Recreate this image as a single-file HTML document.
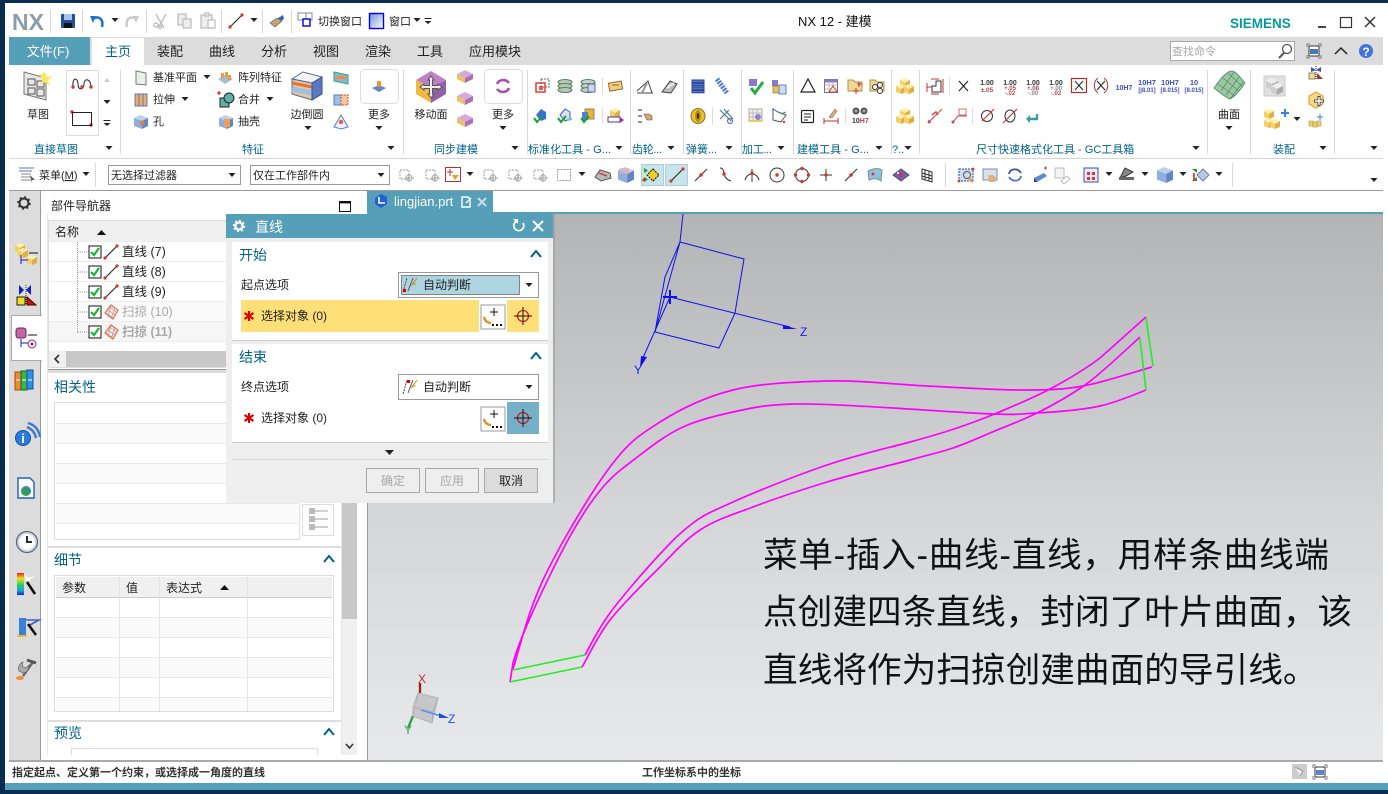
<!DOCTYPE html>
<html lang="zh"><head><meta charset="utf-8"><title>NX 12 - 建模</title>
<style>
html,body{margin:0;padding:0;background:#0a2c4e;width:1388px;height:794px;overflow:hidden}
svg{display:block;font-size:11px}
text{font-family:"Liberation Sans","Noto Sans CJK SC",sans-serif;fill:#222}
.m{text-anchor:middle}
.h{font-size:14px;fill:#00628c}
.g{font-size:11px;fill:#00628c}
.tb{font-size:13px}
.st{font-size:11px;fill:#333;font-weight:700}
.gr{fill:#a8a8a8}
.s8{font-size:7px;font-weight:700;fill:#333}
.s8r{font-size:6.5px;font-weight:700;fill:#b4464e}
.s8b{font-size:7.5px;font-weight:700;fill:#3c4fc0}
.ov{font-size:34.67px;fill:#111}
.ax{font-size:12px;fill:#1a1aff}
</style></head><body>
<svg width="1388" height="794" viewBox="0 0 1388 794" xmlns="http://www.w3.org/2000/svg">
<defs>
<linearGradient id="vp" x1="0" y1="0" x2="0" y2="1"><stop offset="0" stop-color="#b3b4b6"/><stop offset=".55" stop-color="#d5d6d8"/><stop offset="1" stop-color="#e8e9ea"/></linearGradient>
<linearGradient id="bl" x1="0" y1="0" x2="1" y2="1"><stop offset="0" stop-color="#6e94d8"/><stop offset="1" stop-color="#fff"/></linearGradient>
<polygon id="dn" points="-3.5,-2 3.5,-2 0,2" fill="#222"/>
<g id="ovf"><rect x="-3.5" y="-3" width="7" height="1" fill="#222"/><polygon points="-3.5,0 3.5,0 0,3" fill="#222"/></g>
<g id="ln"><path d="M-6,6L6,-6" stroke="#222" stroke-width="1.1"/><circle cx="-6" cy="6" r="1.6" fill="#d3342c"/><circle cx="6" cy="-6" r="1.6" fill="#d3342c"/></g>
<g id="lnm"><path d="M-6,6L6,-6" stroke="#333" stroke-width="1.1"/><circle r="1.8" fill="#d3342c"/></g>
<g id="yc"><polygon points="0,-5 5,-3 0,0 -5,-3" fill="#fff0b0"/><polygon points="-5,-3 0,0 0,5 -5,3" fill="#f5cf62"/><polygon points="5,-3 0,0 0,5 5,3" fill="#dfae45"/></g>
<g id="cb"><polygon points="-1,-7 7,-4 1,-1 -7,-4" fill="#bcd0f0"/><polygon points="-7,-4 1,-1 1,7 -7,4" fill="#8eaee0"/><polygon points="7,-4 1,-1 1,7 7,4" fill="#5f86c8"/></g>
<g id="gyc"><polygon points="0,-6 6,-3 0,0 -6,-3" fill="#eee"/><polygon points="-6,-3 0,0 0,6 -6,3" fill="#ccc"/><polygon points="6,-3 0,0 0,6 6,3" fill="#aaa"/></g>
<g id="pk"><polygon points="0,-8 8,-4 0,0 -8,-4" fill="#d8a8dc"/><polygon points="-8,-4 0,0 0,5 -8,1" fill="#f0c060"/><polygon points="8,-4 0,0 0,5 8,1" fill="#a870b8"/></g>
<g id="chk"><rect x="-6" y="-6" width="12" height="12" fill="#fff" stroke="#111" stroke-width="1"/><path d="M-4,0L-1,3L4,-4" fill="none" stroke="#16b82e" stroke-width="2.2"/></g>
<g id="swp"><path d="M-6,1L0,-7L7,-2L2,7Z" fill="#eee" stroke="#e07040" stroke-width="1.2"/><path d="M-3,-2L4,3M-1,-5L5,0M-5,1L2,6M0,-7L-3,5M4,-4L0,7" stroke="#c88" stroke-width=".7"/></g>
<g id="chv"><path d="M-5,3L0,-3L5,3" fill="none" stroke="#00628c" stroke-width="2"/></g>
<g id="cross"><circle r="5.5" fill="none" stroke="#e00000" stroke-width="1.1"/><path d="M-9,0H9M0,-9V9" stroke="#111" stroke-width="1"/></g>
<g id="plus"><rect x="-12" y="-12" width="24" height="24" fill="#fff" stroke="#999"/><path d="M-3,-5H5M1,-9V-1" stroke="#111" stroke-width="1"/><path d="M-9,0C-8,5 -4,6 -2,6" fill="none" stroke="#e88a20" stroke-width="2.4"/><path d="M-1,8h2M3,8h2M7,8h2" stroke="#111" stroke-width="2"/></g>
<g id="ast"><path d="M0,-5V5M-4.5,-3L4.5,3M-4.5,3L4.5,-3" stroke="#dd0000" stroke-width="2.2"/></g>
<g id="infer"><path d="M-7,7L-3,-7" stroke="#444" stroke-width="1" stroke-dasharray="2 1"/><path d="M-2,6L3,-7" stroke="#555" stroke-width="1"/><path d="M1,1L7,-7L3,-1L6,-1" fill="#e8c020" stroke="#b89010" stroke-width=".8"/></g>
<g id="gicon"><rect x="-6" y="-5" width="9" height="9" fill="none" stroke="#bbb" stroke-width="1.4" stroke-dasharray="2 1"/><path d="M3,-2v9M-1,3h9" stroke="#aaa"/><circle cx="3" cy="3" r="3" fill="none" stroke="#aaa"/></g>
</defs>

<rect width="1388" height="794" fill="#0a2c4e"/>
<rect x="0" y="0" width="1388" height="3" fill="#0b2e50"/>
<rect x="5" y="3" width="1383" height="780" fill="#fff"/>
<rect x="5" y="783" width="1383" height="7" fill="#559fb8"/>

<!-- title bar -->
<text x="12" y="30" style="font-size:23px;font-weight:700;fill:#8b9cab">NX</text>
<path d="M50.5,10V33M82.5,10V33M146.5,10V33M221.5,10V33M262.5,10V33M291.5,10V33" stroke="#d8d8d8"/>
<g transform="translate(68,21)"><rect x="-7" y="-7" width="14" height="14" rx="1" fill="#1f4e9c"/><rect x="-4" y="-7" width="8" height="6" fill="#a9c4ea"/><rect x="-4" y="2" width="8" height="5" fill="#111"/></g>
<g transform="translate(97,21)"><path d="M5,6C7,-2 1,-6 -4,-2" fill="none" stroke="#1d72d6" stroke-width="2.6"/><polygon points="-7,-5 -1,-5 -4,2" fill="#1d72d6"/></g>
<use href="#dn" x="115" y="20"/>
<g transform="translate(132,21)"><path d="M-5,6C-7,-2 -1,-6 4,-2" fill="none" stroke="#ccc" stroke-width="2.6"/><polygon points="7,-5 1,-5 4,2" fill="#ccc"/></g>
<g transform="translate(161,21)" stroke="#bbb" fill="none" stroke-width="1.3"><path d="M-3,7L5,-7M3,7L-4,-5M-5,-7L-2,-1"/><circle cx="-5" cy="4" r="2"/><circle cx="-1" cy="6" r="1.5"/></g>
<g transform="translate(184,21)" fill="#eee" stroke="#bbb" stroke-width="1.2"><rect x="-6" y="-7" width="8" height="11"/><rect x="-1" y="-2" width="8" height="9"/></g>
<g transform="translate(208,21)" fill="#eee" stroke="#bbb" stroke-width="1.2"><rect x="-7" y="-6" width="11" height="13"/><rect x="-3" y="-8" width="4" height="3"/><rect x="0" y="-1" width="7" height="8" fill="#fff"/></g>
<use href="#ln" x="236" y="21"/><use href="#dn" x="254" y="20"/>
<g transform="translate(277,21)"><path d="M-7,2L0,-3L5,0L-2,6Z" fill="#c9a070" stroke="#555" stroke-width=".6"/><path d="M1,-3L6,-6L7,-2L4,0Z" fill="#3a5fc0"/></g>
<g transform="translate(305,20)"><rect x="-7" y="-7" width="8" height="7" fill="none" stroke="#888"/><rect x="1" y="-7" width="6" height="7" fill="none" stroke="#888"/><rect x="-2" y="-1" width="7" height="7" fill="#fff" stroke="#0000ee" stroke-width="1.4"/></g>
<text x="318" y="25">切换窗口</text>
<rect x="369.500" y="13.500" width="14" height="15" fill="url(#bl)" stroke="#0000ee" stroke-width="1.4"/>
<text x="389" y="25">窗口</text>
<use href="#dn" x="417" y="20"/><use href="#ovf" x="428" y="21"/>
<text x="798" y="26" style="font-size:13px;fill:#111">NX 12 - 建模</text>
<text x="1230" y="28" style="font-size:13.500px;font-weight:700;fill:#059a9a">SIEMENS</text>
<rect x="1318" y="26" width="8" height="2" fill="#444"/>
<rect x="1340.500" y="17.500" width="11" height="10" fill="none" stroke="#333" stroke-width="1.2"/>
<path d="M1365,17L1375,27M1375,17L1365,27" stroke="#333" stroke-width="1.5"/>

<!-- tabs -->
<rect x="9" y="37" width="1374" height="28" fill="#dcdcdc"/>
<rect x="9" y="37" width="81" height="28" fill="#559fb8"/>
<rect x="92" y="38" width="52" height="27" fill="#fff"/>
<text x="48" y="56" class="m tb" style="fill:#fff">文件(F)</text>
<text x="118" y="56" class="m tb" style="fill:#00628c">主页</text>
<text x="170" y="56" class="m tb">装配</text><text x="222" y="56" class="m tb">曲线</text><text x="274" y="56" class="m tb">分析</text><text x="326" y="56" class="m tb">视图</text><text x="378" y="56" class="m tb">渲染</text><text x="430" y="56" class="m tb">工具</text><text x="495" y="56" class="m tb">应用模块</text>
<rect x="1170.500" y="41.500" width="124" height="19" fill="#fff" stroke="#aaa"/>
<text x="1172" y="55" class="gr">查找命令</text>
<g fill="none" stroke="#555" stroke-width="1.3"><circle cx="1287" cy="49" r="4.500"/><path d="M1284,53L1279,58" stroke-width="2"/></g>
<g transform="translate(1314,51)"><path d="M-7,-4V-7H-4M4,-7H7V-4M7,4V7H4M-4,7H-7V4" fill="none" stroke="#777"/><rect x="-5" y="-5" width="10" height="10" fill="#fff" stroke="#333"/><rect x="-4" y="-2" width="8" height="5" fill="#4a74c0"/></g>
<path d="M1335,54L1341,48L1347,54" fill="none" stroke="#222" stroke-width="1.5"/>
<circle cx="1366" cy="51" r="7" fill="#3f74d8"/><text x="1366" y="56" class="m" style="font-size:12px;font-weight:700;fill:#fff">?</text>

<!-- ribbon dividers -->
<path d="M120.500,70V154M403.500,70V154M527.500,70V154M630.500,70V154M683.500,70V154M741.500,70V154M793.500,70V154M891.500,70V154M919.500,70V154M1207.500,70V154M1250.500,70V154M1334.500,70V154" stroke="#d8d8d8"/>
<path d="M9,158.500H1383" stroke="#d4d4d4"/>

<!-- sketch -->
<g transform="translate(38,86)"><polygon points="-14,-14 8,-8 8,14 -14,8" fill="#e8e8e8" stroke="#777"/><rect x="-10" y="-7" width="7" height="6" fill="none" stroke="#555"/><rect x="-1" y="-5" width="7" height="6" fill="none" stroke="#555"/><rect x="-10" y="2" width="7" height="6" fill="none" stroke="#555"/><rect x="-1" y="3" width="7" height="7" fill="none" stroke="#555"/><path d="M7,-14L9,-9L15,-10L10,-6L12,0L7,-4L2,-1L5,-7L1,-11Z" fill="#f8e860"/></g>
<text x="38" y="118" class="m">草图</text>
<rect x="66.500" y="70.500" width="32" height="65" fill="#fff" stroke="#ddd"/>
<path d="M73,87C72,76 78,78 78,84C78,91 84,90 84,84C84,78 91,78 91,87" fill="none" stroke="#222"/>
<g fill="#d3342c"><circle cx="73" cy="87" r="1.700"/><circle cx="82" cy="87" r="1.700"/><circle cx="91" cy="87" r="1.700"/><circle cx="72" cy="112" r="1.700"/><circle cx="91" cy="125" r="1.700"/></g>
<rect x="72.500" y="112.500" width="19" height="13" fill="none" stroke="#222"/>
<polygon points="104,82 110,82 107,78" fill="#ccc"/><use href="#dn" x="107" y="102"/><use href="#ovf" x="107" y="123"/>
<text x="56" y="153" class="m g">直接草图</text><use href="#dn" x="109" y="148"/>

<!-- feature -->
<g transform="translate(141,78)"><polygon points="-5,-7 5,-5 5,7 -5,6" fill="#e8f0e8" stroke="#777"/></g>
<text x="153" y="81">基准平面</text><use href="#dn" x="207" y="77"/>
<g transform="translate(141,100)"><rect x="-6" y="-6" width="12" height="12" fill="#f0b060" stroke="#5a7ac0"/><path d="M-2,-6V6M2,-6V6" stroke="#5a7ac0"/></g>
<text x="153" y="103">拉伸</text><use href="#dn" x="185" y="99"/>
<g transform="translate(141,122)"><use href="#cb"/><circle cx="1" cy="1" r="2.500" fill="#e08040"/></g>
<text x="153" y="125">孔</text>
<g transform="translate(225,78)"><polygon points="-7,1 0,-3 8,1 0,6" fill="#a8bcd8"/><rect x="-4" y="-5" width="3" height="5" fill="#e8a040"/><rect x="0" y="-6" width="3" height="5" fill="#e8a040"/><rect x="3" y="-3" width="3" height="5" fill="#e8a040"/></g>
<text x="238" y="81">阵列特征</text>
<g transform="translate(226,100)"><rect x="-6" y="-2" width="9" height="9" fill="#5fb0a8" stroke="#222"/><circle cx="3" cy="-2" r="5" fill="#5fb0a8" stroke="#222"/><path d="M-9,-7h4M-7,-9v4" stroke="#d00"/></g>
<text x="238" y="103">合并</text><use href="#dn" x="270" y="99"/>
<g transform="translate(226,122)"><use href="#cb"/><rect x="-2" y="-3" width="6" height="8" fill="#f0a050"/></g>
<text x="238" y="125">抽壳</text>
<g transform="translate(307,86)"><polygon points="-15,-7 -4,-14 15,-9 5,-3" fill="#f4f4f4" stroke="#4a66b0"/><path d="M-15,-7L5,-3L5,14L-15,8Z" fill="#e8c890" stroke="#4a66b0"/><path d="M-15,-3L5,1" stroke="#e87040" stroke-width="3"/><path d="M-15,3L5,7" stroke="#9cc0e8" stroke-width="5"/><path d="M5,-3L15,-9V8L5,14Z" fill="#5878c0" stroke="#3a4f98"/></g>
<text x="307" y="118" class="m">边倒圆</text><use href="#dn" x="308" y="128"/>
<g transform="translate(341,78)"><polygon points="-7,-6 7,-3 7,6 -7,3" fill="#88b4e0" stroke="#3a6"/><rect x="-5" y="-2" width="10" height="3" fill="#f09040"/></g>
<g transform="translate(341,100)"><rect x="-7" y="-5" width="9" height="10" fill="#9cc0ee" stroke="#5a7ac0"/><rect x="0" y="-5" width="7" height="10" fill="#f4c8a0" stroke="#d85030" stroke-dasharray="2 1"/></g>
<g transform="translate(341,122)"><polygon points="0,-7 7,5 0,7 -7,5" fill="#f0f0ff" stroke="#5a7ac0"/><circle cy="0" r="2.200" fill="#e06030"/></g>
<rect x="360.500" y="69.500" width="38" height="34" rx="4" fill="#fff" stroke="#ddd"/>
<g transform="translate(379,87)"><polygon points="-7,1 0,-2 7,1 0,5" fill="#5f88c8"/><rect x="-2" y="-6" width="4" height="6" fill="#f09030"/></g>
<text x="379" y="118" class="m">更多</text><use href="#dn" x="379" y="128"/>
<text x="253" y="153" class="m g">特征</text><use href="#dn" x="391" y="148"/>

<!-- sync -->
<g transform="translate(431,87)"><polygon points="-15,-7 0,-16 15,-7 0,1" fill="#c080c8"/><polygon points="-15,-7 0,1 0,16 -15,7" fill="#f0b840"/><polygon points="15,-7 0,1 0,16 15,7" fill="#9060a8"/><polygon points="0,-11 3,-7 1.500,-7 1.500,-1.500 7,-1.500 7,-3 11,0 7,3 7,1.500 1.500,1.500 1.500,7 3,7 0,11 -3,7 -1.500,7 -1.500,1.500 -7,1.500 -7,3 -11,0 -7,-3 -7,-1.500 -1.500,-1.500 -1.500,-7 -3,-7" fill="#eee" stroke="#555"/></g>
<text x="431" y="118" class="m">移动面</text>
<use href="#pk" x="465" y="78"/><use href="#pk" x="465" y="100"/><use href="#pk" x="465" y="122"/>
<rect x="484.500" y="69.500" width="38" height="34" rx="4" fill="#fff" stroke="#ddd"/>
<g transform="translate(503,86)" fill="none" stroke="#a850b0" stroke-width="2.600"><path d="M-6,-2C-4,-7 3,-7 6,-3"/><path d="M6,2C4,7 -3,7 -6,3"/></g>
<text x="503" y="118" class="m">更多</text><use href="#dn" x="503" y="128"/>
<text x="434" y="153" class="g">同步建模</text><use href="#dn" x="515" y="148"/>

<!-- standard tools -->
<g transform="translate(542,86)"><rect x="-6" y="-3" width="9" height="9" fill="none" stroke="#e03020" stroke-width="1.4"/><rect x="-1" y="-7" width="8" height="8" fill="none" stroke="#666" stroke-dasharray="2 1"/><rect x="-3" y="0" width="4" height="4" fill="#e06050"/></g>
<g transform="translate(565,86)" stroke="#4f7f60" fill="#b8c8b8"><ellipse cy="-4" rx="7" ry="2.500"/><ellipse cy="0" rx="7" ry="2.500"/><ellipse cy="4" rx="7" ry="2.500"/></g>
<g transform="translate(588,86)" stroke="#4f7f60" fill="#c8d0c8"><ellipse cy="-4" rx="7" ry="2.500"/><ellipse cy="0" rx="7" ry="2.500"/><ellipse cy="4" rx="7" ry="2.500"/><rect x="0" y="-2" width="7" height="8" fill="#d0d8f0" stroke="#5060b0"/></g>
<g transform="translate(616,86)"><rect x="-7" y="-4" width="13" height="8" fill="#f0d080" stroke="#a06020" transform="rotate(-10)"/><path d="M-4,-1H3" stroke="#a06020"/></g>
<path d="M602.500,78V94M602.500,108V124" stroke="#ddd"/>
<g transform="translate(541,116)"><polygon points="-5,-1 0,-7 5,-4 5,3 0,5" fill="#3a70d0"/><path d="M-7,2L-4,6L1,0" fill="none" stroke="#18a030" stroke-width="2"/></g>
<g transform="translate(565,116)"><polygon points="-5,-1 0,-7 5,-4 5,3 0,5" fill="#d8e0f4" stroke="#4060c0"/><path d="M-7,2L-4,6L1,0" fill="none" stroke="#18a030" stroke-width="2"/><path d="M2,4L7,3" stroke="#6cb" stroke-width="2"/></g>
<g transform="translate(588,116)"><rect x="-3" y="-7" width="9" height="10" fill="#f0b030" stroke="#886"/><rect x="-6" y="-4" width="6" height="8" fill="#5080d0"/><path d="M-7,2L-4,6L1,0" fill="none" stroke="#18a030" stroke-width="2"/></g>
<g transform="translate(615,116)"><use href="#yc" y="-3"/><rect x="-7" y="1" width="12" height="5" fill="#fff" stroke="#5030a0"/><polygon points="5,1 9,4 5,7" fill="#a030b0"/></g>
<text x="528" y="153" class="g" textLength="83">标准化工具 - G...</text><use href="#dn" x="619" y="148"/>

<!-- gear -->
<g transform="translate(645,87)" fill="none" stroke="#444"><path d="M-8,6H8M-8,4L3,-6L7,6"/><path d="M-3,6L2,-4" stroke="#999" stroke-width="2"/></g>
<g transform="translate(669,87)"><path d="M-7,5L1,-6L8,-3L2,6Z" fill="#bbb" stroke="#444"/><path d="M-2,1L5,-4" stroke="#eee" stroke-width="2"/></g>
<g transform="translate(645,116)"><path d="M-7,-6H-3M-7,0H-3M-7,6H-3" stroke="#222"/><path d="M-1,-2H4L7,0V4H2Z" fill="#d8a860" stroke="#555" stroke-width=".6"/></g>
<text x="632" y="153" class="g" textLength="30">齿轮...</text><use href="#dn" x="671" y="148"/>

<!-- spring -->
<g transform="translate(698,86)" fill="#5578d0" stroke="#283f90"><rect x="-6" y="-6" width="12" height="2.400"/><rect x="-6" y="-2.600" width="12" height="2.400"/><rect x="-6" y="1" width="12" height="2.400"/><rect x="-6" y="4.400" width="12" height="2.400"/></g>
<path d="M717,79L727,93" stroke="#5578d0" stroke-width="5" stroke-dasharray="2 1"/>
<g transform="translate(698,116)"><ellipse rx="7" ry="7.500" fill="#e8c030" stroke="#8c7010"/><ellipse rx="3" ry="6" fill="#b89010"/><ellipse rx="1.200" ry="3" fill="#333"/></g>
<path d="M712.500,107V125" stroke="#ddd"/>
<g transform="translate(726,116)" fill="none" stroke="#5578a0" stroke-width="1.200"><path d="M-6,-6L5,5M-2,-7L7,3M-6,3L3,-6"/><circle cx="4" cy="5" r="2.500"/></g>
<text x="686" y="153" class="g" textLength="31">弹簧...</text><use href="#dn" x="729" y="148"/>

<!-- machining -->
<g transform="translate(756,87)"><rect x="-7" y="-8" width="8" height="7" fill="#8a78c8"/><path d="M-5,1L-1,6L7,-5" fill="none" stroke="#20b040" stroke-width="3"/></g>
<g transform="translate(779,87)"><rect x="-7" y="-7" width="6" height="6" fill="#8a78c8"/><rect x="-6" y="-1" width="6" height="7" fill="#f0c050" stroke="#555" stroke-width=".5"/><rect x="0" y="-2" width="7" height="9" fill="#cfdcf0" stroke="#6080c0"/></g>
<g transform="translate(756,115)"><rect x="-7" y="-6" width="13" height="12" fill="#eee" stroke="#aa9"/><path d="M-7,-2H6M-7,2H6M-3,-6V6M1,-6V6" stroke="#bbb"/><circle cx="2" cy="2" r="3" fill="#9080d0"/><path d="M-7,6H6" stroke="#e8c020" stroke-width="1.500"/></g>
<g transform="translate(779,115)" fill="none" stroke="#555"><path d="M-6,-6V5L2,7L7,0L-1,-3Z"/><path d="M-6,-7V-3" stroke="#3050d0"/><path d="M2,-1L7,-3" stroke="#20a040"/><circle cx="5" cy="7" r="1.200" fill="#d33" stroke="none"/></g>
<text x="742" y="153" class="g" textLength="30">加工...</text><use href="#dn" x="781" y="148"/>

<!-- modeling tools -->
<polygon points="808,79 815,92 801,92" fill="none" stroke="#222" stroke-width="1.200"/>
<g transform="translate(831,86)"><rect x="-6.500" y="-6.500" width="13" height="13" fill="#fff" stroke="#777"/><rect x="-6.500" y="-6.500" width="13" height="3" fill="#8a78c8"/><path d="M-6,-1H6M-6,3H6M-2,-3V6M2,-3V6" stroke="#bbb"/><polygon points="2,0 6,6 -2,6" fill="#fff" stroke="#d33"/></g>
<g transform="translate(855,86)"><path d="M-7,-6H-2L0,-4H7V5H-7Z" fill="#f0d890" stroke="#a89050"/><path d="M-2,5h6M1,2v6M4,-4v5M2,-2h5" stroke="#d22"/></g>
<g transform="translate(877,86)"><path d="M-7,-6H-2L0,-4H7V5H-7Z" fill="#f0d890" stroke="#a89050"/><g fill="#fff" stroke="#333"><circle cx="-2" cy="1" r="2.500"/><circle cx="3" cy="-1" r="2.500"/><circle cx="3" cy="5" r="2.500"/></g></g>
<rect x="801.500" y="110.500" width="12" height="12" rx="1" fill="#fff" stroke="#222" stroke-width="1.200"/><path d="M804,114H811M804,117H811M804,120H808" stroke="#222"/>
<g transform="translate(831,116)"><path d="M-7,5H7M-7,2V8M7,2V8" stroke="#c03030"/><path d="M-2,1L4,-7L6,-5L1,2Z" fill="#d8b070" stroke="#555" stroke-width=".5"/></g>
<path d="M845.500,108V124" stroke="#ddd"/>
<g transform="translate(860,111)"><circle cx="-4" cy="0" r="3.500" fill="#555"/><circle cx="4" cy="0" r="3.500" fill="#555"/><circle cx="-4" cy="0" r="1.500" fill="#aaa"/><circle cx="4" cy="0" r="1.500" fill="#aaa"/></g>
<text x="852" y="123" class="s8">10<tspan style="fill:#c04048">H7</tspan></text>
<text x="797" y="153" class="g" textLength="72">建模工具 - G...</text><use href="#dn" x="879" y="148"/>
<g transform="translate(905,86)"><use href="#yc" x="0" y="-3"/><use href="#yc" x="-4" y="3"/><use href="#yc" x="4" y="3"/></g>
<g transform="translate(905,116)"><use href="#yc" x="0" y="-3"/><use href="#yc" x="-4" y="3"/><use href="#yc" x="4" y="3"/></g>
<text x="892" y="153" class="g">?..</text><use href="#dn" x="908" y="148"/>

<!-- dimension -->
<g transform="translate(935,86)" fill="none" stroke="#c03030"><path d="M-8,-3V6M8,-7V7M-8,1H-3M-4,-7H4M-4,8H4"/><path d="M-3,6V0H1V-5H6V6Z" stroke="#333"/></g>
<path d="M949.500,77V95" stroke="#ddd"/>
<path d="M959,81L968,91M968,81L959,91" stroke="#222" stroke-width="1.200"/>
<text x="987" y="85" class="m s8">1.00</text><text x="987" y="92" class="m s8r">±.05</text>
<text x="1010" y="85" class="m s8">1.00</text><text x="1010" y="90" class="m s8r" style="font-size:6px">+.05</text><text x="1010" y="95" class="m s8r" style="font-size:6px">-.02</text>
<text x="1033" y="85" class="m s8">1.00</text><text x="1033" y="90" class="m s8r" style="font-size:6px">+.08</text><text x="1033" y="95" class="m s8r" style="font-size:6px;fill:#888">-.00</text>
<text x="1056" y="85" class="m s8">1.00</text><text x="1056" y="90" class="m s8r" style="font-size:6px;fill:#888">+.00</text><text x="1056" y="95" class="m s8r" style="font-size:6px">-.02</text>
<rect x="1071.500" y="78.500" width="15" height="14" fill="#fff" stroke="#b03030" stroke-width="1.200"/><path d="M1075,81L1083,90M1083,81L1075,90" stroke="#222"/>
<path d="M1098,78C1093,82 1093,89 1098,93M1104,78C1109,82 1109,89 1104,93" fill="none" stroke="#b03030"/><path d="M1097,81L1105,90M1105,81L1097,90" stroke="#222"/>
<text x="1124" y="90" class="m s8b" style="font-size:7px">10H7</text>
<text x="1147" y="85" class="m s8b">10H7</text><text x="1147" y="92" class="m s8b" style="font-size:6px">[|8.01]</text>
<text x="1170" y="85" class="m s8b">10H7</text><text x="1170" y="92" class="m s8b" style="font-size:6px">[8.015]</text>
<text x="1194" y="85" class="m s8b">10</text><text x="1194" y="92" class="m s8b" style="font-size:6px">[8.015]</text>
<g transform="translate(935,116)" stroke="#c85050" fill="none"><path d="M-7,7L7,-7M-7,7l3,-1M-7,7l1,-3" stroke-width="1.200"/><path d="M-3,-1L1,-4L3,-1" stroke-width="1.500"/></g>
<g transform="translate(960,116)" stroke="#c85050" fill="none"><path d="M-7,6L-2,0H7"/><circle cx="-7" cy="6" r="1" fill="#c33"/><rect x="-1" y="-7" width="7" height="6" stroke-width=".8"/></g>
<path d="M972.500,107V125" stroke="#ddd"/>
<g transform="translate(987,116)" fill="none"><circle r="5.500" stroke="#333"/><path d="M-5,5L7,-7" stroke="#c33" stroke-width="1.200"/></g>
<g transform="translate(1010,116)" fill="none"><ellipse rx="5" ry="6" stroke="#333"/><path d="M-7,7L7,-7" stroke="#c33" stroke-width="1.200"/></g>
<g transform="translate(1032,117)"><path d="M5,-3V2H-3" fill="none" stroke="#3a9aa8" stroke-width="2.400"/><polygon points="-2,-2 -6,2 -2,6" fill="#3a9aa8"/></g>
<text x="976" y="153" class="g">尺寸快速格式化工具 - GC工具箱</text><use href="#dn" x="1196" y="148"/>

<!-- surface -->
<g transform="translate(1229,85)"><path d="M-15,3C-10,-4 -3,-14 3,-14C8,-13 12,-6 16,-2C12,4 7,11 1,14C-4,12 -10,7 -15,3Z" fill="#9cc8a0" stroke="#5a9870"/><path d="M-11,-1L6,11M-6,-7L10,6M-1,-12L13,1M-8,6L5,-13M-3,10L10,-8M1,14L14,-3" stroke="#4f8a68" stroke-width=".7"/></g>
<text x="1229" y="118" class="m" style="fill:#111">曲面</text><use href="#dn" x="1229" y="128"/>
<g transform="translate(1274,86)"><rect x="-10" y="-10" width="21" height="20" fill="#e0e0e0" stroke="#c8c8c8"/><use href="#gyc" x="-2" y="-2"/><use href="#gyc" x="3" y="3"/></g>
<g transform="translate(1316,73)"><path d="M-5,-6L0,-3L5,-6V-1L0,-3L-5,-1Z" fill="#3a50c0"/><rect x="-7" y="0" width="6" height="6" fill="#f0e080" stroke="#887"/><polygon points="1,6 7,6 1,0" fill="#b03030"/><path d="M0,-7V7" stroke="#333" stroke-dasharray="1 1"/></g>
<g transform="translate(1316,100)"><polygon points="0,-8 7,-4 7,4 0,8 -7,4 -7,-4" fill="#f8d880" stroke="#d09830"/><path d="M-2,1H8M3,-4V6" stroke="#444" stroke-width="3"/><path d="M-1,1H7M3,-3V5" stroke="#fff" stroke-width="1.400"/></g>
<g transform="translate(1272,120)"><use href="#yc" x="-3" y="-6"/><use href="#yc" x="-3" y="3"/><use href="#yc" x="3" y="4"/><path d="M9,-7H17M13,-11V-3" stroke="#3a80e8" stroke-width="2"/></g>
<use href="#dn" x="1297" y="119"/>
<g transform="translate(1315,123)"><rect x="-6" y="-2" width="4" height="5" fill="#f0d070" stroke="#b89030" stroke-width=".6"/><rect x="-2" y="-1" width="4" height="5" fill="#f0d070" stroke="#b89030" stroke-width=".6"/><rect x="2" y="-2" width="4" height="5" fill="#f0d070" stroke="#b89030" stroke-width=".6"/><path d="M2,-6H8M5,-9V-3" stroke="#3a80e8"/></g>
<text x="1284" y="153" class="m g">装配</text><use href="#dn" x="1323" y="148"/><use href="#dn" x="1374" y="148"/>

<!-- selection toolbar -->
<g transform="translate(27,174)"><path d="M-8,-6H7M-8,-3H5" stroke="#5878c0"/><path d="M-6,0H4M-6,3H4M-6,6H4" stroke="#888"/><path d="M3,1L8,6L5,6L5,9Z" fill="#555"/></g>
<text x="39" y="179">菜单(<tspan text-decoration="underline">M</tspan>)</text><use href="#dn" x="86" y="174"/>
<path d="M95.500,163V187M945.500,163V187M1232.500,163V187" stroke="#d8d8d8"/>
<rect x="108.500" y="165.500" width="132" height="19" fill="#fff" stroke="#999"/><text x="111" y="179">无选择过滤器</text><use href="#dn" x="232" y="175"/>
<rect x="250.500" y="165.500" width="139" height="19" fill="#fff" stroke="#999"/><text x="253" y="179">仅在工作部件内</text><use href="#dn" x="381" y="175"/>
<use href="#gicon" x="406" y="175"/><use href="#gicon" x="432" y="175"/>
<rect x="445.500" y="167.500" width="15" height="14" fill="#fff" stroke="#c03030"/><path d="M450,169v7M447,172h6" stroke="#c03030"/><polygon points="452,175 459,175 455,180" fill="#e8a020"/>
<use href="#dn" x="470" y="174"/>
<use href="#gicon" x="490" y="175"/><use href="#gicon" x="515" y="175"/><use href="#gicon" x="540" y="175"/>
<rect x="557.500" y="169.500" width="13" height="11" fill="none" stroke="#999" stroke-dasharray="2 1"/><use href="#dn" x="582" y="174"/>
<g transform="translate(603,175)"><path d="M-8,2L-3,-5L7,-2L8,3L-2,6Z" fill="#bbb" stroke="#555"/><path d="M-4,-2L4,1" stroke="#d04040" stroke-width="1.500"/></g>
<g transform="translate(626,175)"><use href="#cb" transform="scale(1.15)"/><rect x="-7" y="-7" width="10" height="6" fill="#f0a0a0" opacity=".5"/></g>
<rect x="641.500" y="164.500" width="22" height="21" fill="#c8e4ea" stroke="#a8d0da"/>
<rect x="665.500" y="164.500" width="22" height="21" fill="#c8e4ea" stroke="#a8d0da"/>
<g transform="translate(653,175)"><polygon points="0,-6 6,0 0,6 -6,0" fill="#f0d020" stroke="#111" stroke-dasharray="2 1"/><path d="M-9,-7v5l4,-2.500ZM-9,2v5l4,-2.500Z" fill="#18a030"/><circle cx="-9" cy="5" r="1.500" fill="#d22"/></g>
<use href="#ln" x="677" y="175"/>
<use href="#lnm" x="701" y="175"/>
<g transform="translate(725,175)"><path d="M-5,-7C-2,-7 -1,-4 -1,-1C0,3 2,5 6,6" fill="none" stroke="#333" stroke-width="1.100"/><circle cx="-1" cy="-1" r="1.700" fill="#d3342c"/></g>
<g transform="translate(752,175)"><path d="M-7,5C-5,-3 5,-3 7,5M0,-6V7" fill="none" stroke="#333"/><circle cy="-2" r="1.700" fill="#d3342c"/></g>
<g transform="translate(777,175)"><circle r="7" fill="none" stroke="#333"/><circle r="1.700" fill="#d3342c"/></g>
<g transform="translate(802,175)"><circle r="6.500" fill="none" stroke="#333"/><g fill="#d3342c"><circle cx="0" cy="-6.500" r="1.700"/><circle cx="0" cy="6.500" r="1.700"/><circle cx="-6.500" r="1.700"/><circle cx="6.500" r="1.700"/></g></g>
<g transform="translate(826,175)"><path d="M-6,0H6M0,-6V6" stroke="#333"/><circle r="1.700" fill="#d3342c"/></g>
<use href="#lnm" x="851" y="175"/>
<g transform="translate(875,175)"><path d="M-7,-4C-2,-7 4,-7 7,-5L6,6C2,3 -2,3 -6,5Z" fill="#8cc4e0" stroke="#888"/><circle cx="-2" cy="-1" r="1.500" fill="#d33"/></g>
<g transform="translate(901,175)"><polygon points="-8,0 0,-6 8,0 0,6" fill="#7060c0" stroke="#555"/><circle cx="0" cy="0" r="2" fill="#d33"/><circle cx="-3" cy="-2" r="1" fill="#fff"/></g>
<g transform="translate(927,175)" fill="none" stroke="#333"><path d="M-5,-6L5,-3V7L-5,4ZM-5,-2L5,1M-5,1L5,4M-2,-5V5M2,-4V6"/></g>
<g transform="translate(966,175)"><rect x="-7" y="-6" width="14" height="12" fill="#cfdcf0" stroke="#3040c0" stroke-dasharray="2 1"/><circle cx="1" cy="0" r="3.500" fill="none" stroke="#555"/><path d="M3,3L7,7" stroke="#e0a030" stroke-width="2"/><circle cx="-7" cy="6" r="1.400" fill="#d33"/><circle cx="7" cy="-6" r="1.400" fill="#d33"/></g>
<g transform="translate(990,175)"><rect x="-7" y="-6" width="14" height="11" fill="#d8e0f0" stroke="#889"/><path d="M-1,7L-2,0L3,0L6,3L5,7Z" fill="#dcb080"/></g>
<g transform="translate(1015,175)" fill="none" stroke="#3a50a0" stroke-width="1.800"><path d="M-6,-1C-5,-7 3,-7 6,-2"/><path d="M6,1C5,7 -3,7 -6,2" stroke="#5a70c0"/></g>
<g transform="translate(1041,175)"><path d="M-7,3L3,-2L6,1L-4,7Z" fill="#5a8ad8"/><polygon points="-7,3 -4,7 -7,7" fill="#335"/><path d="M3,-7h3M4.500,-8.500v3" stroke="#d33"/></g>
<g transform="translate(1062,175)" fill="none" stroke="#bbb"><rect x="-7" y="-7" width="9" height="10" fill="#f4f4f4"/><path d="M-1,6L5,1L8,4L2,9Z"/></g>
<g transform="translate(1091,175)"><rect x="-7" y="-7" width="14" height="14" fill="#e8ecf8" stroke="#3a50a0"/><rect x="-4" y="-3" width="3" height="3" fill="#d33"/><rect x="1" y="-3" width="3" height="3" fill="#d33"/><rect x="-4" y="2" width="3" height="3" fill="#d33"/><rect x="1" y="2" width="3" height="3" fill="#d33"/></g>
<use href="#dn" x="1109" y="174"/>
<g transform="translate(1127,175)"><path d="M-7,3L-2,-7L6,-3L-1,1Z" fill="#888" stroke="#333"/><path d="M-8,5H7V2H-8Z" fill="#666"/></g>
<use href="#dn" x="1145" y="174"/>
<g transform="translate(1165,175)"><use href="#cb" transform="scale(1.15)"/></g>
<use href="#dn" x="1183" y="174"/>
<g transform="translate(1200,175)"><polygon points="-3,0 3,-6 9,0 3,6" fill="#b8c8e8" stroke="#6a7fb0"/><path d="M-8,-6L-3,-2V-6ZM-8,6L-3,2L-3,6Z" fill="#18a030"/><path d="M-6,-2V6" stroke="#d22" stroke-width="1.600"/></g>
<use href="#dn" x="1219" y="174"/>
<use href="#dn" x="1374" y="180"/>
<rect x="9" y="190" width="1374" height="1" fill="#999"/>

<!-- sidebar -->
<rect x="9" y="191" width="31" height="570" fill="#dcdcdc"/>
<rect x="40" y="191" width="1" height="570" fill="#999"/>
<rect x="11.500" y="315.500" width="30" height="45" fill="#fff" stroke="#aaa"/><rect x="40" y="316" width="2" height="44" fill="#fff"/>
<g transform="translate(24,203)"><circle r="4.500" fill="none" stroke="#333" stroke-width="2"/><circle r="6" fill="none" stroke="#333" stroke-width="1.600" stroke-dasharray="2 2.700"/></g>
<g transform="translate(25,254)"><use href="#yc" x="-5" y="-6"/><use href="#yc" x="-2" y="-1"/><use href="#yc" x="7" y="6"/><path d="M-4,1V10M-4,6H3" stroke="#1020c0" stroke-width="1"/><path d="M4,-1H13" stroke="#111"/></g>
<g transform="translate(25,295)"><path d="M-6,-10L-1,-5L-6,0ZM6,-10L1,-5L6,0Z" fill="#1020c0"/><rect x="-8" y="2" width="8" height="8" fill="#f0e020" stroke="#222"/><polygon points="2,2 11,10 2,10" fill="#c01818" stroke="#500"/><path d="M1,-10V10" stroke="#333" stroke-dasharray="1 1"/></g>
<g transform="translate(25,338)"><rect x="-9" y="-10" width="10" height="10" rx="2.500" fill="#c068a0" stroke="#702060"/><path d="M3,-3H12" stroke="#111"/><path d="M-4,1V9M-4,5H3" stroke="#1020c0"/><circle cx="7" cy="6" r="4" fill="none" stroke="#902080"/><circle cx="7" cy="6" r="1.500" fill="#902080"/></g>
<g transform="translate(25,380)"><rect x="-10" y="-8" width="6" height="18" fill="#f08a30" stroke="#a05010"/><rect x="-4" y="-9" width="6" height="19" fill="#38b848" stroke="#186020"/><rect x="2" y="-10" width="6" height="19" fill="#3090e8" stroke="#1050a0"/><path d="M-9,0h4M-3,0h4M3,0h4" stroke="#fff"/></g>
<g transform="translate(23,436)"><circle cy="2" r="7.500" fill="#2a7ae0" stroke="#1050a0"/><text y="7" class="m" style="font-size:13px;font-weight:700;fill:#fff">i</text><path d="M4,-9C9,-7 12,-3 13,2M5,-13C12,-11 16,-6 17,1" fill="none" stroke="#3a7ad8" stroke-width="2.400"/></g>
<g transform="translate(26,488)"><path d="M-8,-10H4L8,-6V10H-8Z" fill="#fff" stroke="#2060c0" stroke-width="1.400"/><circle cy="3" r="5" fill="#30a050"/><path d="M-3,1C0,-1 3,1 4,4" stroke="#3a80d8" stroke-width="2" fill="none"/></g>
<g transform="translate(27,542)"><circle r="10.500" fill="#c8d4ee" stroke="#666" stroke-width="1.200"/><circle r="8" fill="#fff"/><path d="M0,-6V0H5" fill="none" stroke="#111" stroke-width="1.800"/></g>
<g transform="translate(25,584)"><defs><linearGradient id="rb" x1="0" y1="0" x2="0" y2="1"><stop offset="0" stop-color="#f02020"/><stop offset=".25" stop-color="#f0e020"/><stop offset=".55" stop-color="#20d060"/><stop offset=".8" stop-color="#20a0e0"/><stop offset="1" stop-color="#2020e0"/></linearGradient></defs><rect x="-8" y="-11" width="7" height="22" fill="url(#rb)"/><path d="M2,-2L10,10" stroke="#111" stroke-width="2.600"/><path d="M0,-11L3,-6L9,-8L4,-3L1,-3Z" fill="#fff"/></g>
<g transform="translate(27,627)"><path d="M-8,-9V8H-1V-9Z" fill="#3a80d8"/><path d="M-1,-7H12L3,-2" fill="none" stroke="#3a60c8" stroke-width="1.600"/><path d="M1,-3L9,8" stroke="#111" stroke-width="2.600"/><path d="M-10,9H0" stroke="#e8c020" stroke-width="2"/></g>
<g transform="translate(26,669)"><path d="M-3,7L7,-7" stroke="#666" stroke-width="2.400"/><path d="M1,-9L10,-6" stroke="#555" stroke-width="3"/><path d="M-7,2C-9,-2 -6,-6 -3,-7L-4,-3L0,-1L3,-4C3,0 1,4 -3,4Z" fill="#aaa" stroke="#555" stroke-width=".6"/><ellipse cx="-6" cy="9" rx="4" ry="2" fill="#f09030"/></g>

<!-- navigator -->
<g style="font-size:12px">
<rect x="367" y="191" width="1" height="570" fill="#999"/>
<text x="51" y="210">部件导航器</text>
<rect x="48.500" y="220.500" width="185" height="147" fill="#fff" stroke="#ddd"/>
<rect x="49" y="221" width="180" height="20" fill="#f0f0f0"/>
<text x="55" y="236">名称</text>
<polygon points="97,235 106,235 101.500,230" fill="#111"/>
<rect x="49" y="302" width="180" height="20" fill="#fafafa"/><rect x="49" y="322" width="180" height="20" fill="#f6f6f6"/>
<path d="M49,241.500H230M49,261.500H230M49,281.500H230M49,301.500H230M49,321.500H230M49,341.500H230" stroke="#ececec"/>
<path d="M77.500,242V333M78,252H88M78,272H88M78,292H88M78,312H88M78,332H88" stroke="#999" stroke-dasharray="1 1"/>
<use href="#chk" x="95" y="252"/><use href="#chk" x="95" y="272"/><use href="#chk" x="95" y="292"/><use href="#chk" x="95" y="312"/><use href="#chk" x="95" y="332"/>
<use href="#ln" x="111" y="252"/><use href="#ln" x="111" y="272"/><use href="#ln" x="111" y="292"/>
<use href="#swp" x="111" y="312"/><use href="#swp" x="111" y="332"/>
<text x="122" y="256" style="font-size:12.500px">直线 (7)</text><text x="122" y="276" style="font-size:12.500px">直线 (8)</text><text x="122" y="296" style="font-size:12.500px">直线 (9)</text>
<text x="122" y="316" class="gr" style="font-size:12.500px">扫掠 (10)</text><text x="122" y="336" class="gr" style="font-size:12.500px;font-weight:700">扫掠 (11)</text>
<rect x="49" y="351" width="180" height="16" fill="#f0f0f0"/><rect x="66" y="351" width="165" height="16" fill="#c8c8c8"/>
<path d="M59,355L55,359L59,363" fill="none" stroke="#333" stroke-width="1.600"/>
<rect x="47" y="369" width="180" height="4" fill="#ddd"/><rect x="47" y="369" width="180" height="1" fill="#999"/>

<text x="54" y="392" class="h">相关性</text>
<rect x="54.500" y="402.500" width="245" height="137" fill="#fff" stroke="#ddd"/>
<rect x="56" y="424" width="170" height="19" fill="#fafafa"/><rect x="56" y="464" width="170" height="19" fill="#fafafa"/><rect x="56" y="504" width="242" height="19" fill="#fafafa"/>
<path d="M56,423.500H298M56,443.500H298M56,463.500H298M56,483.500H298M56,503.500H298M56,523.500H298" stroke="#e8e8e8"/>
<rect x="302.500" y="504.500" width="31" height="31" fill="#fff" stroke="#ddd"/>
<g fill="#bbb"><rect x="309" y="508" width="6" height="6"/><rect x="309" y="516" width="6" height="6"/><rect x="309" y="524" width="6" height="6"/></g>
<path d="M315,511H328M315,519H328M315,527H328" stroke="#cbb" stroke-width="1.400"/>
<rect x="47" y="546" width="294" height="2" fill="#ddd"/>
<text x="54" y="565" class="h">细节</text><use href="#chv" x="329" y="559"/>
<rect x="54.500" y="575.500" width="279" height="136" fill="#fff" stroke="#ddd"/>
<rect x="56" y="577" width="276" height="20" fill="#f0f0f0"/>
<rect x="56" y="618" width="276" height="19" fill="#fafafa"/><rect x="56" y="658" width="276" height="19" fill="#fafafa"/><rect x="56" y="698" width="276" height="13" fill="#fafafa"/>
<path d="M56,597.500H332" stroke="#ccc"/><path d="M56,617.500H332M56,637.500H332M56,657.500H332M56,677.500H332M56,697.500H332" stroke="#e8e8e8"/>
<path d="M119.500,577V711M159.500,577V711M247.500,577V711" stroke="#e4e4e4"/>
<text x="62" y="592">参数</text><text x="126" y="592">值</text><text x="166" y="592">表达式</text>
<polygon points="220,590 229,590 224.500,585" fill="#111"/>
<rect x="47" y="720" width="294" height="2" fill="#ddd"/>
<text x="54" y="738" class="h">预览</text><use href="#chv" x="329" y="732"/>
<path d="M71.500,755V748.500H317.500V755" fill="none" stroke="#ddd"/>
<rect x="47" y="214" width="1" height="541" fill="#e6e6e6"/>
<rect x="341" y="214" width="1" height="541" fill="#e6e6e6"/>
<rect x="342" y="214" width="15" height="541" fill="#f0f0f0"/>
<rect x="342" y="380" width="15" height="239" fill="#c8c8c8"/>
<path d="M346,744L349.500,748L353,744" fill="none" stroke="#333" stroke-width="1.600"/>
<rect x="339.500" y="201.500" width="11" height="10" fill="#fff" stroke="#111" stroke-width="1"/><rect x="339" y="201" width="12" height="2.400" fill="#111"/>
</g>

<!-- viewport -->
<rect x="368" y="212" width="1015" height="2" fill="#559fb8"/>
<rect x="368" y="214" width="1015" height="546" fill="url(#vp)"/>
<rect x="367" y="191" width="126" height="21" fill="#559fb8"/>
<g transform="translate(381,201)"><path d="M-6,-3L0,-7L6,-4V3L0,7L-6,3Z" fill="#2060d0"/><path d="M-2,-4V2H4" fill="none" stroke="#fff" stroke-width="1.600"/></g>
<text x="394" y="206" style="font-size:13px;fill:#fff">lingjian.prt</text>
<g transform="translate(466,202)"><path d="M-4,-5H2L4,-3V5H-4Z" fill="none" stroke="#fff" stroke-width="1.400"/><path d="M0,1L5,-4" stroke="#fff" stroke-width="1.400"/></g>
<path d="M478,198L486,206M486,198L478,206" stroke="#c9dde5" stroke-width="2"/>

<!-- CSYS -->
<g fill="none" stroke="#1010e8" stroke-width="1"><path d="M683,214L680,242L744,259L735,313L719,348L655,332L680,242L665,277L655,332"/><path d="M670,297L642,360M670,297L790,327"/></g>
<path d="M663,297H677M670,290V304" stroke="#1010e8" stroke-width="2"/>
<polygon points="783,325 797,329 783,329" fill="#1010e8"/>
<polygon points="640,368 647,357 641,356" fill="#1010e8"/>
<text x="800" y="336" class="ax">Z</text><text x="634" y="374" class="ax">Y</text>

<!-- curves -->
<g fill="none" stroke="#ff00ff" stroke-width="1.700" stroke-linejoin="round">
<path d="M513,669C518,654 527,614 543,580C559,546 590.500,493 610,467C629.500,441 639.500,435 660,422C680.500,409 705,397 733,390C761,383 795,382 827,381C859,380 895,384.500 927,386C959,387.500 994,390 1020,390C1046,390 1061,390 1083,386C1105,382 1140.500,370 1152,367"/>
<path d="M510,682L513,663C516,652 521,638.500 530,618C539,597.500 556,562 568,540C580,518 591,501 603,487C615,473 627,465 640,455C653,445 667.500,434 683,427C698.500,420 715,416 733,412C751,408 766,404.700 793,404C820,403.300 860,406 893,408C926,410 969,413 993,414C1017,415 1019,414 1037,413C1055,412 1082,410 1100,406C1118,402 1138,393 1146,390"/>
<path d="M585,655C589,648 597.500,630 610,613C622.500,596 646,569 660,554C674,539 681,532 693,523C705,514 711,512 733,502C755,492 797.500,475 827,465C856.500,455 888,448 910,442C932,436 942.500,433 957,428C971.500,423 981.500,419.500 997,413C1012.500,406.500 1033,398 1050,389C1067,380 1084,370 1100,358C1116,344 1138,324 1146,317"/>
<path d="M582,667C587,659 597.500,636 610,620C622.500,604 642,585 657,570C672,555 684,540.500 700,530C716,519.500 732,515 753,507C774,499 801,490 827,482C853,474 889,465.700 910,460C931,454 940,452.500 953,448C966,443.500 976,439 990,433C1004,427 1021,421 1037,413C1053,405 1068,397 1085,385C1102,373 1131,345 1140,337"/>
</g>
<path d="M513,670L585,655M510,682L582,667M1146,318L1153,366M1140,339L1146,390" stroke="#22ee22" stroke-width="1.600" fill="none"/>

<!-- overlay text -->
<text x="763" y="567" class="ov" textLength="566">菜单-插入-曲线-直线，用样条曲线端</text>
<text x="763" y="624" class="ov">点创建四条直线，封闭了叶片曲面，该</text>
<text x="763" y="682" class="ov">直线将作为扫掠创建曲面的导引线。</text>

<!-- triad -->
<g transform="translate(425,708)"><path d="M-5,-15V-25" stroke="#9a2020" stroke-width="2.400"/><path d="M-12,8L-17,20" stroke="#30a050" stroke-width="2.400"/><polygon points="-7,-15 13,-10 7,15 -12,8" fill="#c6c6c8" stroke="#b4b4b6"/><path d="M-12,-1L-7,-15M-12,-1L8,4L13,-10M8,4L7,15M-12,-1V8" fill="none" stroke="#b0b0b2"/><path d="M-4,2L16,8" stroke="#5a90f0" stroke-width="1.600"/><polygon points="14,5 24,10 14,10" fill="#1a50e0"/></g>
<text x="418" y="683" style="font-size:12px;fill:#c03030">X</text>
<text x="448" y="723" style="font-size:12px;fill:#1a50ff">Z</text>
<text x="404" y="734" style="font-size:12px;fill:#40a060">Y</text>

<!-- status -->
<rect x="9" y="760" width="1374" height="2" fill="#aaa"/>
<text x="12" y="776" class="st">指定起点、定义第一个约束，或选择成一角度的直线</text>
<text x="642" y="776" class="st">工作坐标系中的坐标</text>
<rect x="1292" y="764" width="15" height="15" fill="#ccc"/><path d="M1295,767L1303,771L1300,776" stroke="#999" fill="#eee"/>
<g transform="translate(1320,772)"><path d="M-7,-4V-7H-4M4,-7H7V-4M7,4V7H4M-4,7H-7V4" fill="none" stroke="#777"/><rect x="-5" y="-5" width="10" height="10" fill="#fff" stroke="#333"/><rect x="-4" y="-2" width="8" height="5" fill="#5a84d0"/></g>

<!-- dialog -->
<g style="font-size:12px">
<rect x="553" y="214" width="2" height="289" fill="#9a9a9a" opacity=".6"/>
<rect x="226" y="214" width="327" height="289" fill="#eeeeee"/>
<rect x="226" y="214" width="327" height="24" fill="#559fb8"/>
<g transform="translate(239,226)"><circle r="3.600" fill="none" stroke="#fff" stroke-width="2.400"/><circle r="5.400" fill="none" stroke="#fff" stroke-width="1.600" stroke-dasharray="2 2.200"/></g>
<text x="255" y="232" style="font-size:14px;fill:#fff">直线</text>
<path d="M523,223A5,5 0 1 1 516,221.500" fill="none" stroke="#fff" stroke-width="1.700"/><polygon points="513,219 518,219 518,224" fill="#fff"/>
<path d="M533,221L543,231M543,221L533,231" stroke="#fff" stroke-width="2"/>
<rect x="232" y="242" width="316" height="98" fill="#fff"/><rect x="232" y="340" width="316" height="1" fill="#ccc"/>
<rect x="232" y="344" width="316" height="98" fill="#fff"/><rect x="232" y="442" width="316" height="1" fill="#ccc"/>
<text x="239" y="260" class="h">开始</text><use href="#chv" x="536" y="254"/>
<text x="241" y="289">起点选项</text>
<rect x="398.500" y="272.500" width="140" height="25" fill="#fff" stroke="#999"/>
<rect x="401.500" y="275.500" width="118" height="19" fill="#add4e0" stroke="#222" stroke-dasharray="1 1"/>
<use href="#infer" x="410" y="285"/><rect x="403" y="289" width="3" height="3" fill="#d00"/>
<text x="423" y="289">自动判断</text><use href="#dn" x="529" y="285"/>
<rect x="241" y="300" width="238" height="32" fill="#ffdf78"/>
<use href="#ast" x="249" y="316"/><text x="261" y="320">选择对象 (0)</text>
<use href="#plus" x="493" y="317"/>
<rect x="507" y="300" width="32" height="32" fill="#ffdf78"/><use href="#cross" x="523" y="316"/>
<text x="239" y="362" class="h">结束</text><use href="#chv" x="536" y="356"/>
<text x="241" y="391">终点选项</text>
<rect x="398.500" y="374.500" width="140" height="25" fill="#fff" stroke="#999"/>
<use href="#infer" x="410" y="387"/><rect x="407" y="380" width="3" height="3" fill="#d00"/>
<text x="423" y="391">自动判断</text><use href="#dn" x="529" y="387"/>
<use href="#ast" x="249" y="418"/><text x="261" y="422">选择对象 (0)</text>
<use href="#plus" x="493" y="419"/>
<rect x="507" y="402" width="32" height="32" fill="#74b1c9"/><use href="#cross" x="523" y="418"/>
<polygon points="385,450 394,450 389.500,455" fill="#222"/>
<path d="M232,459.500H548" stroke="#d8d8d8"/>
<rect x="366.500" y="468.500" width="53" height="24" fill="#eee" stroke="#aaa"/><text x="393" y="485" class="m gr">确定</text>
<rect x="425.500" y="468.500" width="53" height="24" fill="#eee" stroke="#aaa"/><text x="452" y="485" class="m gr">应用</text>
<rect x="484.500" y="468.500" width="53" height="24" fill="#dcdcdc" stroke="#aaa"/><text x="511" y="485" class="m">取消</text>
</g>
</svg>
</body></html>
